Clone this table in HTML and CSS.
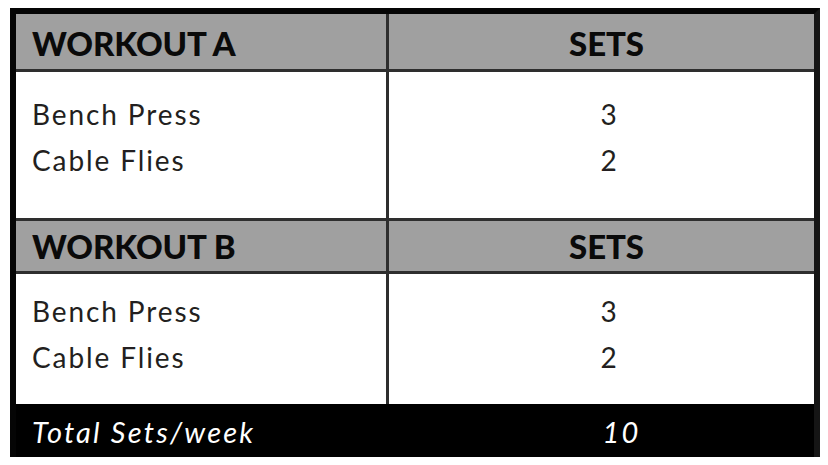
FILE: index.html
```html
<!DOCTYPE html>
<html lang="en">
<head>
<meta charset="utf-8">
<title>Workout Sets</title>
<link rel="stylesheet" href="styles.css">
</head>
<body>
<div class="sheet">
  <div class="row head head-a">
    <div class="cell c1">WORKOUT A</div>
    <div class="cell c2 sets">SETS</div>
  </div>
  <div class="row body body-a">
    <div class="cell c1"><div class="line">Bench Press</div><div class="line">Cable Flies</div></div>
    <div class="cell c2 num"><div class="line">3</div><div class="line">2</div></div>
  </div>
  <div class="row head head-b">
    <div class="cell c1">WORKOUT B</div>
    <div class="cell c2 sets">SETS</div>
  </div>
  <div class="row body body-b">
    <div class="cell c1"><div class="line">Bench Press</div><div class="line">Cable Flies</div></div>
    <div class="cell c2 num"><div class="line">3</div><div class="line">2</div></div>
  </div>
  <div class="row foot">
    <div class="cell c1">Total Sets/week</div>
    <div class="cell c2 total">10</div>
  </div>
</div>
</body>
</html>
```
FILE: styles.css
```css
html, body {
  margin: 0;
  padding: 0;
  background: #ffffff;
}

body {
  padding: 8px 0 0 10px;
  font-family: Lato, "Open Sans", sans-serif;
  color: #231f20;
}

.sheet {
  width: 798px;
  border: 6px solid #050505;
  border-right-color: #151515;
  border-bottom: none;
}

.row {
  display: grid;
  grid-template-columns: 370px 425px;
  column-gap: 3px;
  background: #2e2e2e;
}

.cell {
  box-sizing: border-box;
}

.c1 {
  padding-left: 16px;
}

.c2 {
  text-align: center;
}

.head .cell {
  background: #a0a0a0;
  font-weight: 900;
  font-size: 33px;
  color: #0a0a0a;
  letter-spacing: -0.1px;
}

.head-a {
  border-bottom: 3px solid #2e2e2e;
}

.head-a .cell {
  height: 55px;
  padding-top: 4px;
  line-height: 51px;
}

.head-b {
  border-bottom: 3px solid #2e2e2e;
}

.head-b .cell {
  height: 50px;
  line-height: 50px;
}

.sets {
  padding-left: 10px;
}

.body .cell {
  background: #ffffff;
  font-size: 28px;
  line-height: 46px;
  letter-spacing: 1.9px;
}

.body-a {
  border-bottom: 3px solid #2e2e2e;
}

.body-a .cell {
  height: 146px;
  padding-top: 19px;
}

.body-b .cell {
  height: 130px;
  padding-top: 14px;
}

.num {
  padding-left: 16px;
}

.foot {
  background: #000000;
}

.foot .cell {
  background: #000000;
  color: #ffffff;
  font-style: italic;
  font-size: 29px;
  height: 53px;
  line-height: 53px;
  padding-top: 1px;
  letter-spacing: 2.2px;
}

.total {
  padding-left: 40px;
}
```
